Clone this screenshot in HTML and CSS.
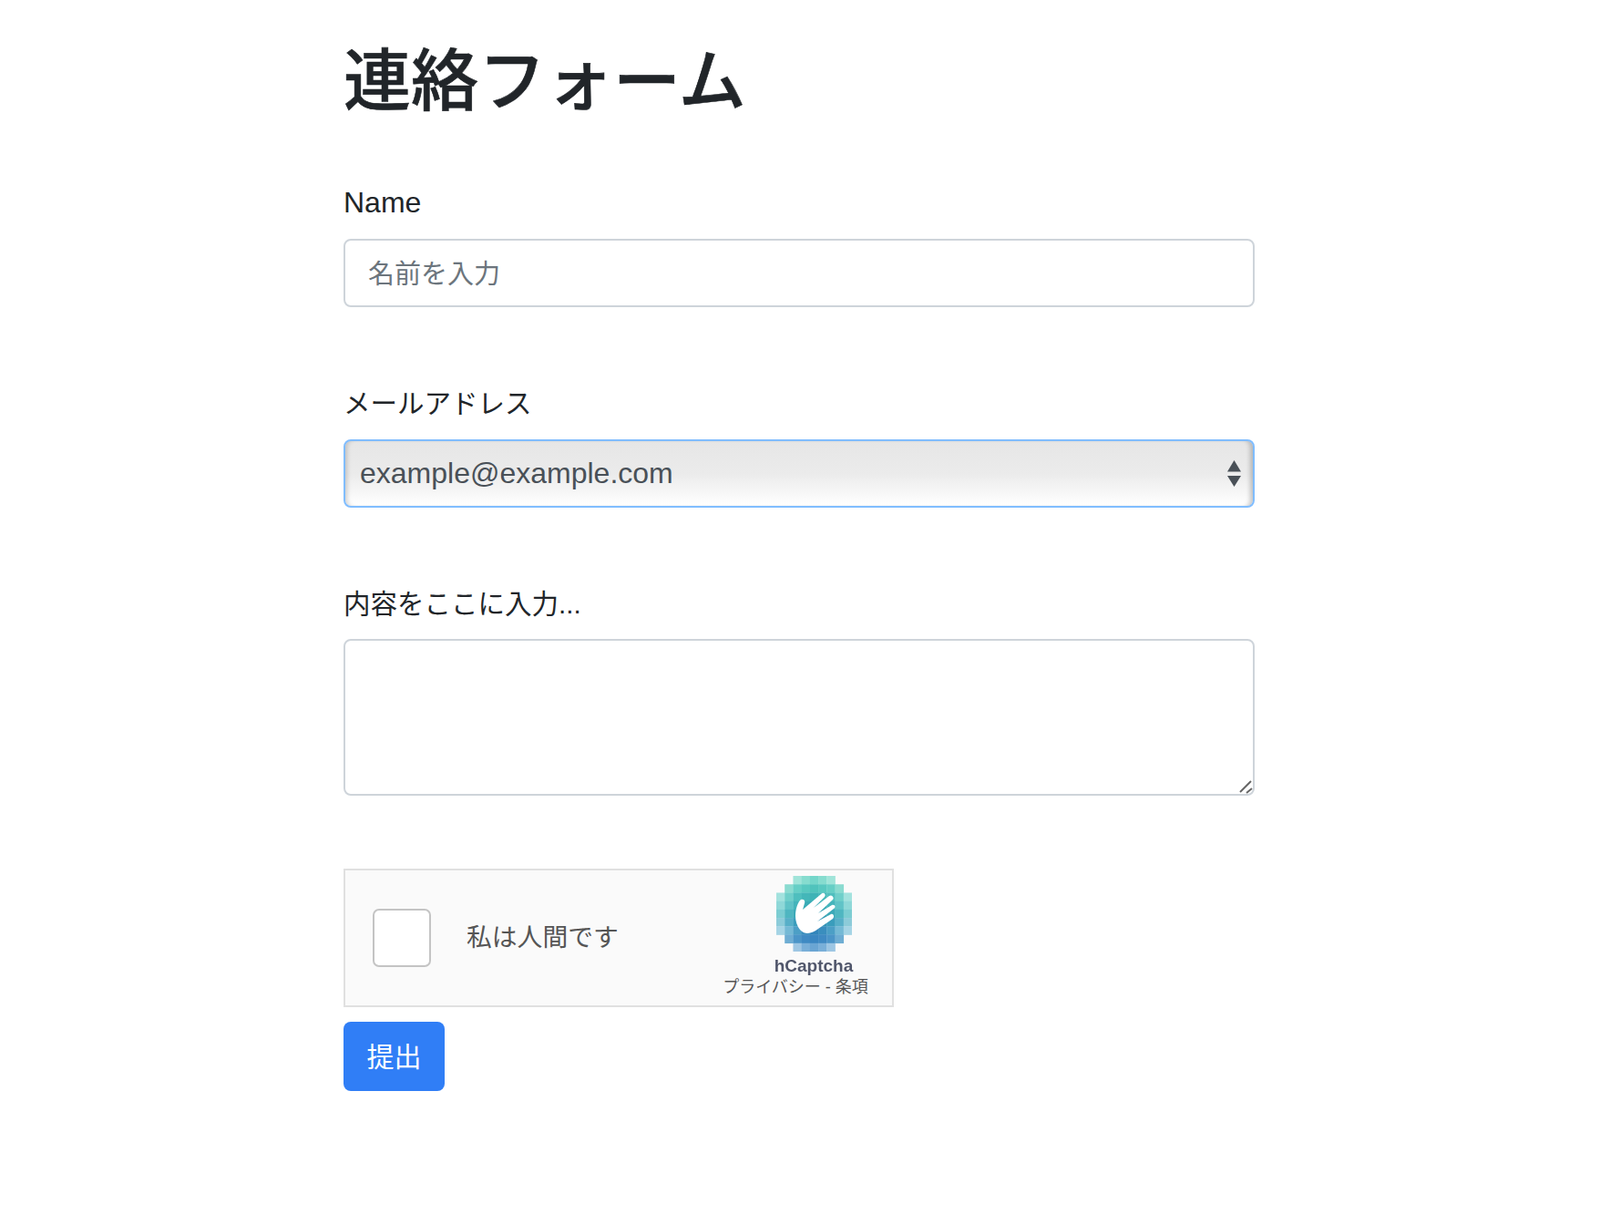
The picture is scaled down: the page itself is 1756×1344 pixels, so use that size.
FILE: index.html
```html
<!DOCTYPE html>
<html lang="ja">
<head>
    <title>連絡フォーム</title>
    <link rel="stylesheet" href="styles.css">
</head>
<body>
<div class="container">
    <h1>連絡フォーム</h1>
    <form>
        <div class="form-group">
            <label class="label-latin" for="name">Name</label>
            <input class="form-control" id="name" type="text" placeholder="名前を入力">
        </div>
        <div class="form-group">
            <label for="email">メールアドレス</label>
            <div class="field-wrap">
                <select class="form-select" id="email">
                    <option>example@example.com</option>
                </select>
                <svg class="select-arrows" viewBox="0 0 15 29">
                    <path d="M7.5 0 15 12.5H0Z"/>
                    <path d="M7.5 29 0 17H15Z"/>
                </svg>
            </div>
        </div>
        <div class="form-group">
            <label class="label-tight" for="content">内容をここに入力...</label>
            <div class="field-wrap">
                <textarea class="form-control" id="content"></textarea>
                <svg class="resize-grip" viewBox="0 0 16 16">
                    <path d="M2 14 14 2M9 15 15 10"/>
                </svg>
            </div>
        </div>
        <div class="captcha">
            <div class="captcha-box"></div>
            <div class="captcha-text">私は人間です</div>
            <div class="captcha-brand">
                <svg class="captcha-logo" viewBox="0 0 83 83" id="logo"></svg>
                <div class="captcha-name">hCaptcha</div>
                <div class="captcha-links">プライバシー - 条項</div>
            </div>
        </div>
        <button class="btn" type="button">提出</button>
    </form>
</div>

<script>
    // mosaic rows of the hCaptcha mark: [first column, colours...]
    const rows = [
        [2, '#a0e4d9', '#86dccf', '#74d6ca', '#86dccf', '#a0e4d9'],
        [1, '#8adbd0', '#66cfc6', '#58c8c0', '#50c3bc', '#58c8c0', '#66cfc6', '#8adbd0'],
        [0, '#a3e2de', '#6fcfca', '#4fbfbe', '#44b7b9', '#3eb3b6', '#44b7b9', '#4fbfbe', '#6fcfca', '#a3e2de'],
        [0, '#8fd8d8', '#60c3c7', '#44b4bb', '#3aacb7', '#36a9b5', '#3aacb7', '#44b4bb', '#60c3c7', '#8fd8d8'],
        [0, '#7ccdd2', '#4fb6c1', '#3ba9b8', '#349fb3', '#329cb1', '#349fb3', '#3ba9b8', '#4fb6c1', '#7ccdd2'],
        [0, '#8ccbd9', '#57afc8', '#3a9dbc', '#3393b6', '#2f90b4', '#3393b6', '#3a9dbc', '#57afc8', '#8ccbd9'],
        [0, '#a5d4e5', '#74b9d5', '#4c9fc6', '#3a8ebe', '#3285bb', '#3a8ebe', '#4c9fc6', '#74b9d5', '#a5d4e5'],
        [1, '#6eadd3', '#4b95c8', '#3f8ac3', '#3a86c1', '#3f8ac3', '#4b95c8', '#6eadd3'],
        [2, '#9dc6e3', '#79afd8', '#6aa5d3', '#79afd8', '#9dc6e3']
    ];
    const logo = document.getElementById('logo');
    const size = 83 / 9;
    let marks = '';
    rows.forEach((row, y) => {
        row.slice(1).forEach((colour, i) => {
            marks += `<rect x="${(row[0] + i) * size}" y="${y * size}" width="${size + 0.3}" height="${size + 0.3}" fill="${colour}"/>`;
        });
    });
    marks += '<path fill="#fff" d="M21 44C21 36 24 28 27 26C30 25 32 27 31 30L29 37L49 20C52 17 55 20 53 23L41 35L58 22C61 20 64 24 62 26L46 41L61 32C64 31 66 34 63 36L45 50L60 42C63 41 64 45 62 47L46 58C40 63 32 65 27 60C23 56 21 50 21 44Z"/>';
    logo.innerHTML = marks;
</script>
</body>
</html>
```
FILE: styles.css
```css
body {
    margin: 0;
    background: #fff;
    color: #212529;
    font-family: "Liberation Sans", "Noto Sans CJK JP", sans-serif;
    font-size: 32px;
    line-height: 47px;
}

.container {
    width: 1000px;
    margin-left: 377px;
}

h1 {
    margin: 0;
    padding: 44px 0 64px;
    font-size: 74px;
    font-weight: 500;
    line-height: 91px;
    -webkit-text-stroke: .6px #212529;
}

label {
    display: block;
    margin-bottom: 16px;
    font-size: 29.5px;
}

.label-latin {
    font-size: 32px;
}

.label-tight {
    margin-bottom: 15px;
}

.form-group {
    margin-bottom: 82px;
}

.field-wrap {
    position: relative;
}

.form-control {
    display: block;
    box-sizing: border-box;
    width: 1000px;
    height: 75px;
    padding: 4px 25px 0;
    border: 2px solid #ced4da;
    border-radius: 8px;
    background: #fff;
    color: #495057;
    font: inherit;
    font-size: 29px;
    outline: none;
}

.form-control::placeholder {
    color: #6c757d;
    opacity: 1;
}

textarea.form-control {
    height: 172px;
    resize: none;
}

.resize-grip {
    position: absolute;
    right: 2px;
    bottom: 2px;
    width: 16px;
    height: 16px;
    fill: none;
    stroke: #666;
    stroke-width: 2;
}

.form-select {
    display: block;
    box-sizing: border-box;
    width: 1000px;
    height: 75px;
    padding: 0 16px;
    border: 2px solid #80bdff;
    border-radius: 8px;
    background: linear-gradient(#e6e6e6, #ebebeb 50%, #fff);
    box-shadow: inset 5px 0 5px -3px rgba(0, 0, 0, .18), inset -6px 0 5px -3px rgba(0, 0, 0, .22);
    color: #495057;
    font: inherit;
    appearance: none;
    outline: none;
}

.select-arrows {
    position: absolute;
    top: 23px;
    right: 15px;
    width: 15px;
    height: 29px;
    fill: #495057;
}

.captcha {
    display: flex;
    align-items: center;
    box-sizing: border-box;
    width: 604px;
    height: 152px;
    margin-top: -2px;
    margin-bottom: 16px;
    padding-left: 30px;
    border: 2px solid #e0e0e0;
    background: #fafafa;
}

.captcha-box {
    box-sizing: border-box;
    width: 64px;
    height: 64px;
    border: 2px solid #c4c4c4;
    border-radius: 7px;
    background: #fff;
}

.captcha-text {
    margin-left: 39px;
    padding-bottom: 2px;
    color: #555;
    font-size: 27.8px;
}

.captcha-brand {
    display: flex;
    flex-direction: column;
    align-items: center;
    align-self: flex-start;
    width: 160px;
    margin-left: auto;
    margin-right: 26px;
    padding-top: 6px;
}

.captcha-logo {
    display: block;
    width: 83px;
    height: 83px;
    margin-left: 40px;
    filter: blur(.6px);
}

.captcha-name {
    margin-top: 4px;
    margin-left: 40px;
    color: #50566b;
    font-size: 19px;
    font-weight: 700;
    line-height: 24px;
    filter: blur(.4px);
}

.captcha-links {
    margin-top: 1px;
    color: #555;
    font-size: 18px;
    line-height: 20px;
    white-space: nowrap;
}

.btn {
    display: block;
    box-sizing: border-box;
    width: 111px;
    height: 76px;
    border: none;
    border-radius: 8px;
    background: #307ef6;
    color: #fff;
    font: inherit;
    font-size: 30px;
}
```
